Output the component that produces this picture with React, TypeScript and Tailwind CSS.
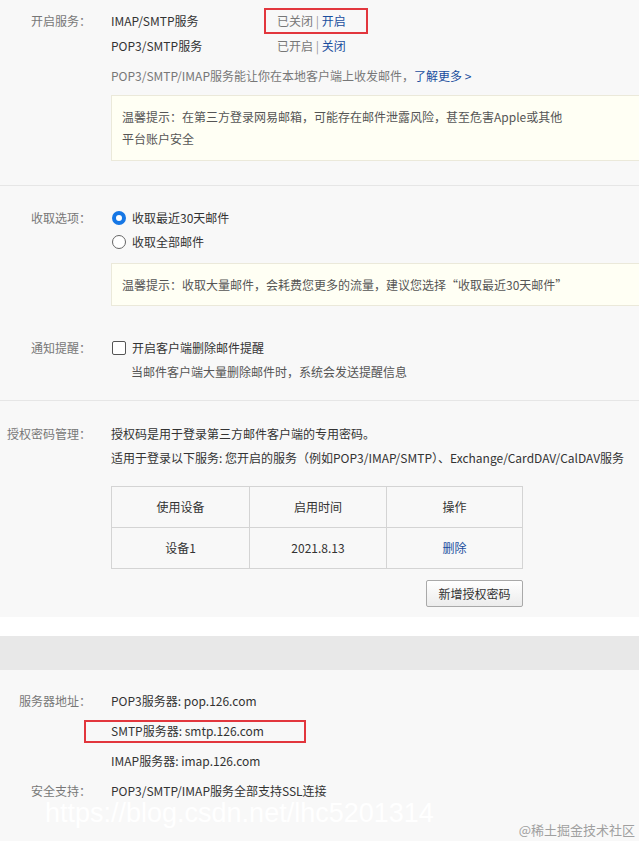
import React from "react";

const FONT = { fontFamily: '"Microsoft YaHei", "Noto Sans CJK SC", "Noto Sans", sans-serif' };

function Label({ children }: { children: React.ReactNode }) {
  return <div className="w-[91px] shrink-0 text-right text-[#777] leading-[24px]">{children}</div>;
}

export default function App() {
  return (
    <div
      className="relative w-[639px] h-[841px] overflow-hidden bg-[#f8f8f8] text-[12px] text-[#333] whitespace-nowrap"
      style={FONT}
    >
      {/* 开启服务 */}
      <section className="pt-[8px] pb-[24px] border-b border-[#e6e6e6]">
        <div className="flex">
          <div className="w-[91px] shrink-0 text-right text-[#777] leading-[25px]">开启服务：</div>
          <div className="ml-[20px] flex-1">
            <div className="flex h-[25px] leading-[25px]">
              <span className="w-[166px]">IMAP/SMTP服务</span>
              <span className="relative text-[#777]">
                已关闭 <span className="text-[#999]">|</span> <a className="text-[#1a4e9e]">开启</a>
                <span className="absolute -left-[13px] top-0 w-[104px] h-[26px] border-2 border-[#e2363d]" />
              </span>
            </div>
            <div className="flex h-[25px] leading-[25px]">
              <span className="w-[166px]">POP3/SMTP服务</span>
              <span className="text-[#777]">
                已开启 <span className="text-[#999]">|</span> <a className="text-[#1a4e9e]">关闭</a>
              </span>
            </div>
            <div className="mt-[5px] h-[25px] leading-[25px] text-[#777]">
              POP3/SMTP/IMAP服务能让你在本地客户端上收发邮件，
              <a className="text-[#1a4e9e]">了解更多 &gt;</a>
            </div>
            <div className="mt-[7px] w-[560px] border border-[#ebe9da] bg-[#fffff4] px-[10px] py-[10px] leading-[22px] text-[#555]">
              <div>温馨提示：在第三方登录网易邮箱，可能存在邮件泄露风险，甚至危害Apple或其他</div>
              <div>平台账户安全</div>
            </div>
          </div>
        </div>
      </section>

      {/* 收取选项 / 通知提醒 */}
      <section className="pt-[20px] pb-[16px] border-b border-[#e6e6e6]">
        <div className="flex">
          <Label>收取选项：</Label>
          <div className="ml-[20px] flex-1">
            <div className="flex items-center h-[24px]">
              <span className="w-[14px] h-[14px] ml-[1px] rounded-full border-[4px] border-[#1677e5] bg-white" />
              <span className="ml-[6px]">收取最近30天邮件</span>
            </div>
            <div className="flex items-center h-[24px]">
              <span className="w-[14px] h-[14px] ml-[1px] rounded-full border border-[#666] bg-white" />
              <span className="ml-[6px]">收取全部邮件</span>
            </div>
            <div className="mt-[9px] w-[560px] h-[43px] flex items-center border border-[#ebe9da] bg-[#fffff4] px-[10px] text-[#555]">
              温馨提示：收取大量邮件，会耗费您更多的流量，建议您选择“收取最近30天邮件”
            </div>
          </div>
        </div>
        <div className="flex mt-[30px]">
          <Label>通知提醒：</Label>
          <div className="ml-[20px] flex-1">
            <div className="flex items-center h-[24px]">
              <span className="w-[14px] h-[14px] ml-[1px] rounded-[2px] border border-[#555] bg-white" />
              <span className="ml-[6px]">开启客户端删除邮件提醒</span>
            </div>
            <div className="h-[24px] leading-[24px] pl-[20px] text-[#555]">当邮件客户端大量删除邮件时，系统会发送提醒信息</div>
          </div>
        </div>
      </section>

      {/* 授权密码管理 */}
      <section className="pt-[21px] pb-[10px]">
        <div className="flex">
          <Label>授权密码管理：</Label>
          <div className="ml-[20px] flex-1">
            <div className="h-[24px] leading-[24px]">授权码是用于登录第三方邮件客户端的专用密码。</div>
            <div className="h-[24px] leading-[24px]">
              适用于登录以下服务: 您开启的服务（例如POP3/IMAP/SMTP）、Exchange/CardDAV/CalDAV服务
            </div>
            <div className="mt-[16px] w-[412px]">
              <table className="w-full border-collapse text-center">
                <tbody>
                  <tr className="h-[41px]">
                    <td className="w-[138px] border border-[#d4d4d4]">使用设备</td>
                    <td className="w-[137px] border border-[#d4d4d4]">启用时间</td>
                    <td className="border border-[#d4d4d4]">操作</td>
                  </tr>
                  <tr className="h-[41px]">
                    <td className="border border-[#d4d4d4]">设备1</td>
                    <td className="border border-[#d4d4d4]">2021.8.13</td>
                    <td className="border border-[#d4d4d4] text-[#1a4e9e]">删除</td>
                  </tr>
                </tbody>
              </table>
              <div className="flex justify-end mt-[11px]">
                <button
                  className="w-[97px] h-[27px] rounded-[2px] border border-[#a9a9a9] bg-gradient-to-b from-white to-[#ececec] text-[#333] text-[12px]"
                  style={FONT}
                >
                  新增授权密码
                </button>
              </div>
            </div>
          </div>
        </div>
      </section>

      <div className="h-[19px] bg-white" />
      <div className="h-[34px] bg-[#e8e8e8]" />

      {/* 服务器地址 */}
      <section className="pt-[16px]">
        <div className="flex">
          <div className="w-[91px] shrink-0 text-right text-[#777] leading-[30px]">服务器地址：</div>
          <div className="ml-[20px] flex-1">
            <div className="h-[30px] leading-[30px]">POP3服务器: pop.126.com</div>
            <div className="relative h-[30px] leading-[30px]">
              SMTP服务器: smtp.126.com
              <span className="absolute -left-[27px] top-[4px] w-[222px] h-[23px] border-2 border-[#e2363d]" />
            </div>
            <div className="h-[30px] leading-[30px]">IMAP服务器: imap.126.com</div>
          </div>
        </div>
        <div className="flex">
          <div className="w-[91px] shrink-0 text-right text-[#777] leading-[30px]">安全支持：</div>
          <div className="ml-[20px] flex-1 h-[30px] leading-[30px]">POP3/SMTP/IMAP服务全部支持SSL连接</div>
        </div>
      </section>

      {/* watermarks */}
      <div
        className="absolute left-[45px] top-[803px] text-[27px] leading-[20px] text-white"
        style={{ fontFamily: '"Liberation Sans Narrow", "Liberation Sans", sans-serif' }}
      >
        https://blog.csdn.net/lhc5201314
      </div>
      <div className="absolute right-[4px] top-[822px] text-[13px] leading-[16px] text-[#a0a0a0]">@稀土掘金技术社区</div>
    </div>
  );
}
